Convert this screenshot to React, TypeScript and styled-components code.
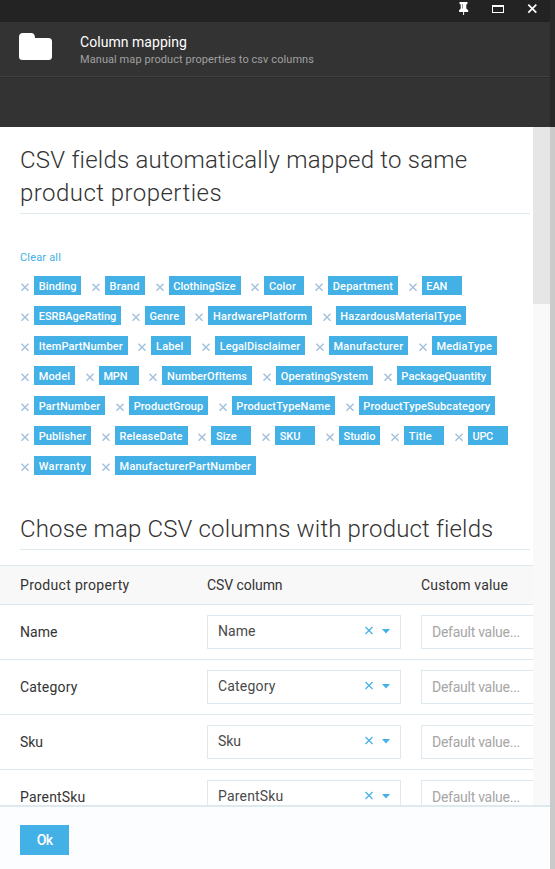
import React, { useLayoutEffect, useRef, useState } from "react";
import styled, { createGlobalStyle } from "styled-components";

const GlobalStyle = createGlobalStyle`
  * { box-sizing: border-box; }
  body {
    margin: 0;
    font-family: Roboto, "Open Sans", sans-serif;
    font-size: 14px;
    color: #333;
  }
`;

const blue = "#43b0e6";
const line = "#dde8ef";

const Window = styled.div`
  display: flex;
  width: 555px;
  height: 869px;
  overflow: hidden;
`;
const Blade = styled.main`
  display: flex;
  flex-direction: column;
  width: 550px;
  background: #fff;
`;
const Backdrop = styled.div`
  width: 5px;
  background: linear-gradient(#282828 127px, #cacaca 127px);
`;
const TitleBar = styled.div`
  display: flex;
  flex: 0 0 22px;
  justify-content: flex-end;
  background: #232323;
  svg { display: block; }
`;
const Header = styled.header`
  display: flex;
  flex: 0 0 56px;
  padding: 11px 0 0 19px;
  background: #333;
  border-bottom: 1px solid #2b2b2b;
  box-shadow: inset 0 -1px #404040;
`;
const HeaderText = styled.div`
  margin-left: 28px;
  padding-top: 1px;
`;
const Title = styled.div`
  height: 17px;
  line-height: 17px;
  color: #fff;
`;
const Subtitle = styled.div`
  height: 16px;
  font-size: 11px;
  line-height: 17px;
  color: #a0a0a0;
`;
const Toolbar = styled.div`
  flex: 0 0 49px;
  background: #333;
`;
const Body = styled.div`
  display: flex;
  flex: 0 0 678px;
  overflow: hidden;
`;
const Content = styled.div`
  width: 533px;
  overflow: hidden;
`;
const ScrollTrack = styled.div`
  width: 17px;
  background: #f9f9f9;
`;
const ScrollThumb = styled.div`
  height: 177px;
  background: #e6e6e6;
`;
const Heading = styled.h1<{ $top: number }>`
  width: 510px;
  margin: 0 0 0 20px;
  padding: ${(p) => p.$top}px 0 3px;
  border-bottom: 1px solid ${line};
  font-size: 24px;
  font-weight: 300;
  line-height: 33px;
`;
const ClearAll = styled.a`
  display: block;
  margin: 35px 0 0 20px;
  height: 16px;
  font-size: 11px;
  line-height: 17px;
  color: ${blue};
`;
const Tags = styled.ul`
  display: flex;
  flex-wrap: wrap;
  gap: 11px 9.7px;
  width: 510px;
  margin: 11px 0 0 20px;
  padding: 0;
  list-style: none;
`;
const TagItem = styled.li`
  display: flex;
  height: 19px;
  svg { width: 14px; height: 19px; }
`;
const Tag = styled.span<{ $width: number }>`
  width: ${(p) => p.$width}px;
  padding-left: 4.7px;
  background: ${blue};
  color: #fff;
  font-size: 11px;
  font-weight: 500;
  line-height: 21px;
`;
const Table = styled.div`
  width: 640px;
  margin-top: 15px;
`;
const Row = styled.div<{ $head?: boolean }>`
  display: grid;
  grid-template-columns: 187px 214px 200px;
  align-items: center;
  height: ${(p) => (p.$head ? 40 : 55)}px;
  padding-left: 20px;
  background: ${(p) => (p.$head ? "#f8f8f8" : "#fff")};
  border-top: ${(p) => (p.$head ? `1px solid ${line}` : "0")};
  border-bottom: 1px solid ${line};
`;
const Select = styled.div`
  display: flex;
  align-items: center;
  width: 194px;
  height: 34px;
  padding: 0 9px 2px 10px;
  border: 1px solid ${line};
  color: #4a4a4a;
  svg { margin-left: auto; }
`;
const Input = styled.div`
  height: 34px;
  padding-left: 10px;
  border: 1px solid ${line};
  line-height: 33px;
  color: #a6a6a6;
`;
const Footer = styled.footer`
  flex: 0 0 64px;
  padding: 18px 20px;
  border-top: 2px solid #dde9ee;
  background: #fbfdfe;
`;
const Button = styled.button`
  display: block;
  width: 49px;
  height: 30px;
  padding: 0;
  border: 0;
  background: ${blue};
  color: #fff;
  font: 500 14px/30px Roboto, sans-serif;
`;
const Line = styled.span`
  display: inline-block;
  justify-self: start;
  white-space: nowrap;
`;

/* One line of text, tracked so that it fills the given width. */
function Fit({ text, width }: { text: string; width: number }) {
  const ref = useRef<HTMLSpanElement>(null);
  const [spacing, setSpacing] = useState(0);
  useLayoutEffect(() => {
    const el = ref.current;
    if (!el) return;
    el.style.letterSpacing = "0px";
    const natural = el.getBoundingClientRect().width;
    const next = (width - natural) / text.length;
    el.style.letterSpacing = `${next}px`;
    setSpacing(next);
  }, [text, width]);
  return <Line ref={ref} style={{ letterSpacing: spacing }}>{text}</Line>;
}

/* name, tag width, text width */
const tags: [string, number, number][] = [
  ["Binding", 47.2, 38], ["Brand", 40, 30], ["ClothingSize", 72, 62.5],
  ["Color", 40, 27], ["Department", 70, 60.5], ["EAN", 40, 21],
  ["ESRBAgeRating", 87, 77.5], ["Genre", 40, 30], ["HardwarePlatform", 103.6, 94],
  ["HazardousMaterialType", 130.3, 121], ["ItemPartNumber", 93.7, 84],
  ["Label", 40, 27.5], ["LegalDisclaimer", 90, 80.5], ["Manufacturer", 79.3, 70],
  ["MediaType", 65.3, 55.5], ["Model", 41, 31.5], ["MPN", 40, 24],
  ["NumberOfItems", 89.9, 80], ["OperatingSystem", 97, 87.5],
  ["PackageQuantity", 94.2, 85], ["PartNumber", 71.3, 61.5],
  ["ProductGroup", 79, 69.5], ["ProductTypeName", 103.3, 94],
  ["ProductTypeSubcategory", 136, 127], ["Publisher", 57.2, 47.5],
  ["ReleaseDate", 72.8, 63], ["Size", 40, 20.5], ["SKU", 40, 20.5],
  ["Studio", 41.7, 32], ["Title", 40, 23], ["UPC", 40, 20.5],
  ["Warranty", 57.2, 47.5], ["ManufacturerPartNumber", 141, 131.5],
];

const fields: [string, number][] = [
  ["Name", 37.5], ["Category", 57.5], ["Sku", 23], ["ParentSku", 65.5],
];

export default function App() {
  return (
    <>
      <GlobalStyle />
      <Window>
        <Blade>
          <TitleBar>
            <svg width="98" height="22" viewBox="452 0 98 22" fill="none">
              <path
                fill="#fff"
                d="M459.5 2h8v1.8l-1.2.7v4l1.9 1.7V12h-4.1v3h-1v-3h-4v-1.8l1.6-1.7v-4l-1.2-.7z"
              />
              <path stroke="#999" d="M462.5 4v4.500" />
              <path fill="#fff" fillRule="evenodd" d="M492 5h12v8h-12zM493 7h10v5h-10z" />
              <path stroke="#fff" strokeWidth="1.700" d="m528.300 4.700 8 8m0-8-8 8" />
            </svg>
          </TitleBar>
          <Header>
            <svg width="33" height="28" viewBox="0 0 33 28">
              <path
                fill="#fff"
                d="M4 0h8q4 0 4 5h13.500q3.500 0 3.500 3.500v15q0 3.500-3.500 3.500h-26q-3.500 0-3.500-3.500V4q0-4 4-4z"
              />
            </svg>
            <HeaderText>
              <Title><Fit text="Column mapping" width={107} /></Title>
              <Subtitle>
                <Fit text="Manual map product properties to csv columns" width={234} />
              </Subtitle>
            </HeaderText>
          </Header>
          <Toolbar />
          <Body>
            <Content>
              <Heading $top={17}>
                <Fit text="CSV fields automatically mapped to same" width={447} />
                <br />
                <Fit text="product properties" width={202} />
              </Heading>
              <ClearAll><Fit text="Clear all" width={41} /></ClearAll>
              <Tags>
                {tags.map(([name, width, textWidth]) => (
                  <TagItem key={name}>
                    <svg viewBox="0 0 14 19" stroke="#a5c2dd" strokeWidth="1.500">
                      <path d="m1.500 7.700 7 7m0-7-7 7" />
                    </svg>
                    <Tag $width={width}><Fit text={name} width={textWidth} /></Tag>
                  </TagItem>
                ))}
              </Tags>
              <Heading $top={38}>
                <Fit text="Chose map CSV columns with product fields" width={473} />
              </Heading>
              <Table>
                <Row $head>
                  <Fit text="Product property" width={109.500} />
                  <Fit text="CSV column" width={75.500} />
                  <Fit text="Custom value" width={87} />
                </Row>
                {fields.map(([name, width]) => (
                  <Row key={name}>
                    <Fit text={name} width={width} />
                    <Select>
                      <Fit text={name} width={width} />
                      <svg width="26" height="10" viewBox="0 0 26 10">
                        <path stroke={blue} strokeWidth="1.200" d="m.500 1 7 7m0-7-7 7" />
                        <path fill={blue} d="M17 3h8l-4 4.500z" />
                      </svg>
                    </Select>
                    <Input><Fit text="Default value..." width={88} /></Input>
                  </Row>
                ))}
              </Table>
            </Content>
            <ScrollTrack><ScrollThumb /></ScrollTrack>
          </Body>
          <Footer><Button><Fit text="Ok" width={15.500} /></Button></Footer>
        </Blade>
        <Backdrop />
      </Window>
    </>
  );
}
